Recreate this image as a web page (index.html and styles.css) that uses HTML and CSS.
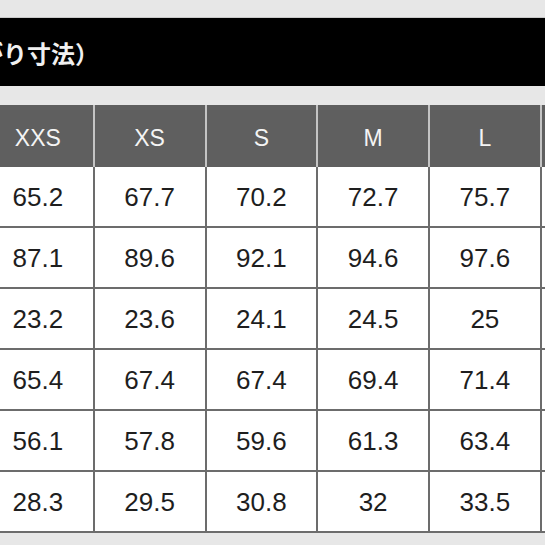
FILE: index.html
```html
<!DOCTYPE html>
<html lang="ja">
<head>
<meta charset="utf-8">
<link rel="stylesheet" href="styles.css">
</head>
<body>
<div class="page">
  <div class="title-bar"><span class="title">（出来上がり寸法）</span></div>
  <div class="size-table">
    <div class="cell head">XXS</div><div class="cell head">XS</div><div class="cell head">S</div><div class="cell head">M</div><div class="cell head">L</div><div class="cell head"></div>
    <div class="cell">65.2</div><div class="cell">67.7</div><div class="cell">70.2</div><div class="cell">72.7</div><div class="cell">75.7</div><div class="cell"></div>
    <div class="cell">87.1</div><div class="cell">89.6</div><div class="cell">92.1</div><div class="cell">94.6</div><div class="cell">97.6</div><div class="cell"></div>
    <div class="cell">23.2</div><div class="cell">23.6</div><div class="cell">24.1</div><div class="cell">24.5</div><div class="cell">25</div><div class="cell"></div>
    <div class="cell">65.4</div><div class="cell">67.4</div><div class="cell">67.4</div><div class="cell">69.4</div><div class="cell">71.4</div><div class="cell"></div>
    <div class="cell">56.1</div><div class="cell">57.8</div><div class="cell">59.6</div><div class="cell">61.3</div><div class="cell">63.4</div><div class="cell"></div>
    <div class="cell">28.3</div><div class="cell">29.5</div><div class="cell">30.8</div><div class="cell">32</div><div class="cell">33.5</div><div class="cell"></div>
  </div>
</div>
</body>
</html>
```
FILE: styles.css
```css
html, body {
  margin: 0;
  padding: 0;
  background: #e7e7e7;
  overflow: hidden;
}
.page {
  width: 545px;
  height: 545px;
  overflow: hidden;
  padding-top: 17px;
  box-sizing: border-box;
}
.title-bar {
  height: 69px;
  background: #000;
  border-top: 1px solid #c9c9c9;
  box-sizing: border-box;
  display: flex;
  align-items: center;
  overflow: hidden;
  white-space: nowrap;
}
.title {
  margin-left: -117px;
  color: #f0f0f0;
  font-family: "Noto Sans CJK JP", sans-serif;
  font-weight: 700;
  font-size: 24px;
  line-height: 1;
  margin-top: 2px;
}
.size-table {
  margin-top: 19px;
  margin-left: -17px;
  display: grid;
  grid-template-columns: repeat(6, 111.75px);
  grid-template-rows: 62px repeat(6, 61px);
  width: 670.5px;
}
.cell {
  box-sizing: border-box;
  display: flex;
  align-items: center;
  justify-content: center;
  background: #fff;
  border-right: 2px solid #6c6c6c;
  border-bottom: 2px solid #6c6c6c;
  font-family: "Liberation Sans", Arial, sans-serif;
  font-size: 26px;
  color: #1e1e1e;
  padding-top: 1px;
}
.cell.head {
  background: #5f5f5f;
  color: #f4f4f4;
  font-size: 23px;
  border-right: 2px solid #c4c4c4;
  border-bottom: none;
  padding-top: 4px;
}
```
